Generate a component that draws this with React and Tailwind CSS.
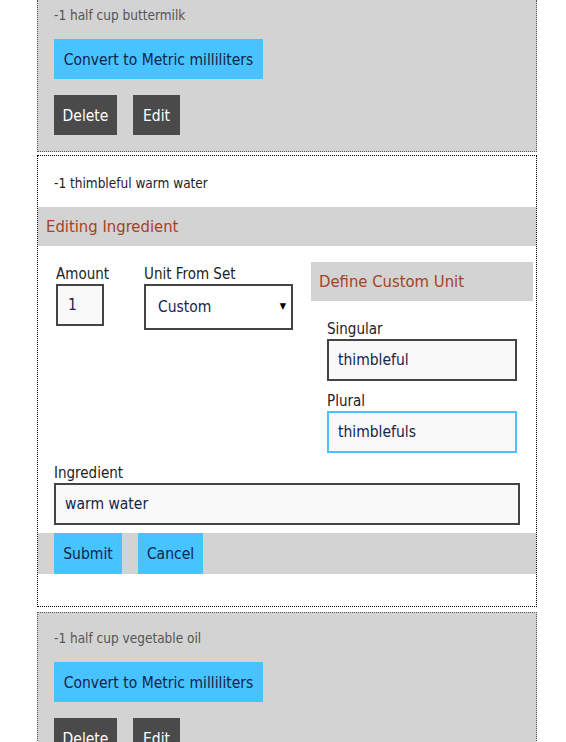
import React from 'react';

const font = { fontFamily: "'Liberation Sans Narrow', 'DejaVu Sans Condensed', 'Roboto', sans-serif" };

const IngredientCard = ({ line, first }) => (
  <div
    className={`w-[500px] bg-[#d3d3d3] border border-dotted border-[#555] px-4 pb-4 ${first ? 'border-t-0 pt-[5px]' : 'pt-[15px] mt-[5px]'}`}
  >
    <p className="text-[13.5px] leading-5 text-[#555]">{line}</p>
    <button className="mt-[14px] h-10 w-[209px] pt-[3px] bg-[#47c3ff] text-[15.5px] text-[#14244a]">
      Convert to Metric milliliters
    </button>
    <div className="mt-4 flex gap-4">
      <button className="h-10 w-[63px] pt-[3px] bg-[#4a4a4a] text-[15.5px] text-white">Delete</button>
      <button className="h-10 w-[47px] pt-[3px] bg-[#4a4a4a] text-[15.5px] text-white">Edit</button>
    </div>
  </div>
);

const Field = ({ className, value, focused }) => (
  <div
    className={`flex items-center border-2 bg-[#f9f9f9] pt-[2px] text-[15.5px] text-[#14244a] ${focused ? 'border-[#47c3ff]' : 'border-[#444]'} ${className}`}
  >
    {value}
  </div>
);

export default function App() {
  return (
    <div className="min-h-[742px] bg-white" style={font}>
      <div className="ml-[37px] w-[500px]">
        <IngredientCard first line="-1 half cup buttermilk" />

        {/* editing card */}
        <div className="mt-[3px] w-[500px] border border-dotted border-black bg-white pb-[32px]">
          <p className="pl-4 pt-[17px] text-[13.5px] leading-5 text-[#222]">-1 thimbleful warm water</p>
          <div className="mt-[14px] h-[39px] bg-[#d3d3d3] pl-2 pt-[2px] flex items-center text-[16.5px] text-[#a5421f]">
            Editing Ingredient
          </div>

          <div className="flex">
            <div className="flex pl-[18px] pt-[18px]">
              <div className="w-[88px]">
                <div className="text-[15px] leading-5 text-[#222]">Amount</div>
                <Field className="w-[48px] h-[42px] pl-[10px]" value="1" />
              </div>
              <div>
                <div className="text-[15px] leading-5 text-[#222]">Unit From Set</div>
                <div className="relative flex items-center w-[149px] h-[46px] border-2 border-[#444] bg-white pl-[12px] pt-[2px] text-[15.5px] text-[#14244a]">
                  Custom
                  <span className="absolute right-[5px] top-[14px] text-[9px] text-black">▼</span>
                </div>
              </div>
            </div>
            <div className="ml-auto mr-[3px] mt-4 w-[222px]">
              <div className="h-[39px] bg-[#d3d3d3] pl-2 pt-[2px] flex items-center text-[16.5px] text-[#a5421f]">
                Define Custom Unit
              </div>
              <div className="pl-4 pt-[18px]">
                <div className="text-[15px] leading-5 text-[#222]">Singular</div>
                <Field className="w-[190px] h-[42px] pl-[9px]" value="thimbleful" />
                <div className="mt-[10px] text-[15px] leading-5 text-[#222]">Plural</div>
                <Field className="w-[190px] h-[42px] pl-[9px]" value="thimblefuls" focused />
              </div>
            </div>
          </div>

          <div className="pl-4 pt-[10px]">
            <div className="text-[15px] leading-5 text-[#222]">Ingredient</div>
            <Field className="w-[466px] h-[42px] pl-[9px]" value="warm water" />
          </div>

          <div className="mt-2 h-[41px] bg-[#d3d3d3] pl-4 flex gap-4">
            <button className="h-full w-[68px] pt-[3px] bg-[#47c3ff] text-[15.5px] text-[#14244a]">Submit</button>
            <button className="h-full w-[65px] pt-[3px] bg-[#47c3ff] text-[15.5px] text-[#14244a]">Cancel</button>
          </div>
        </div>

        <IngredientCard line="-1 half cup vegetable oil" />
      </div>
    </div>
  );
}
